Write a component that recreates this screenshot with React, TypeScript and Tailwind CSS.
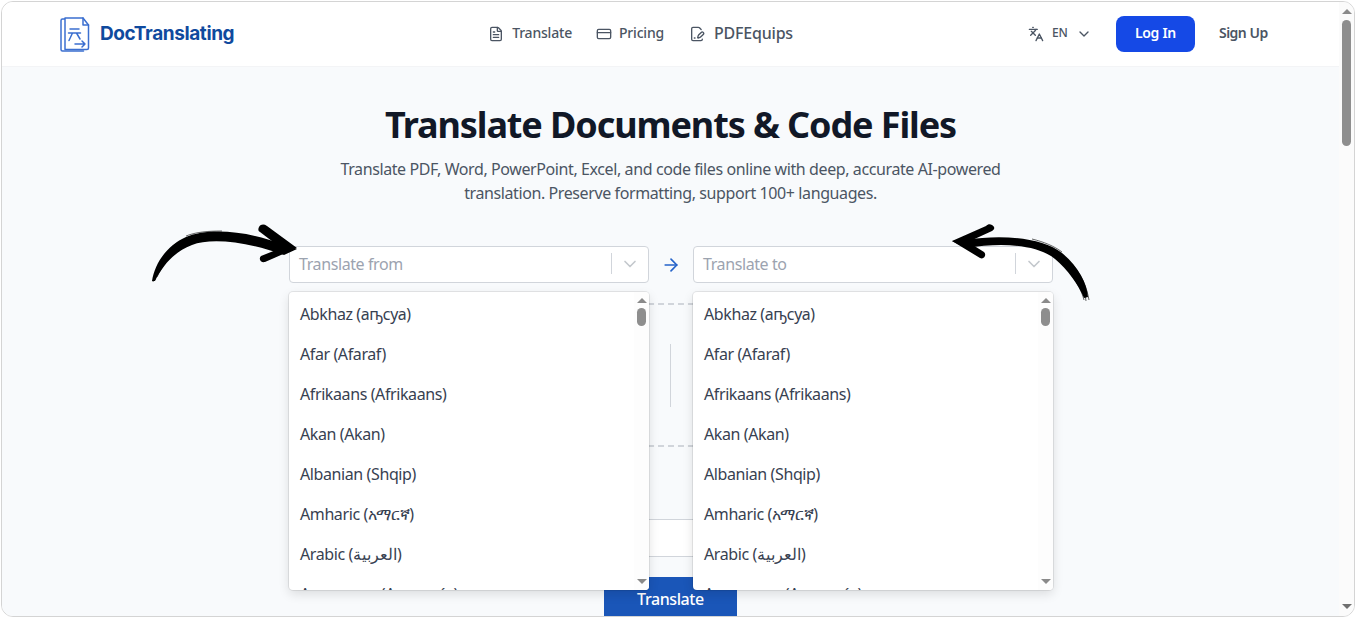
import { ArrowRight, ChevronDown, CreditCard, FilePenLine, FileText, Languages } from 'lucide-react';

const languages = [
  'Abkhaz (аҧсуа)',
  'Afar (Afaraf)',
  'Afrikaans (Afrikaans)',
  'Akan (Akan)',
  'Albanian (Shqip)',
  'Amharic (አማርኛ)',
  'Arabic (العربية)',
  'Aragonese (Aragonés)',
];

const Logo = () => (
  <svg width="31" height="36" viewBox="0 0 31 36" fill="none" stroke="#3b6fd0" strokeWidth="1.5" strokeLinecap="round" strokeLinejoin="round">
    <path d="M5 3H2.500a1.500 1.500 0 0 0-1.500 1.500v29a1.500 1.500 0 0 0 1.500 1.500h21" />
    <path d="M5 3v30.500h22a1.500 1.500 0 0 0 1.500-1.500V9l-5.500-7H5z" fill="#fff" />
    <path d="M23 2v7h5.500" />
    <path d="M10 13h9M8.500 17h12M12.500 17l-3.500 7.500M16.500 17l3.500 6" />
    <path d="M15 28h10M22 25l3 3-3 3" />
  </svg>
);

const BrushArrows = () => (
  <div className="absolute left-[-2px] top-[-67px] z-20">
    <svg className="absolute left-[150px] top-[222px]" width="150" height="62" viewBox="150 222 150 62" fill="#000">
      <path d="M152 281C155 262 168 245 186 237C208 228 246 230 284 245L297 249L284 255C246 241 210 238 192 245C174 252 163 265 155 281Z" />
      <path d="M259 227C261 224 264 224 267 226L297 248L265 262C261 263 258 259 261 256L281 248L260 232C258 231 258 229 259 227Z" />
      <g fill="none" stroke="#000" strokeWidth="0.6">
        <path d="M153 282C156 266 164 252 178 242" />
        <path d="M155 280C158 268 166 256 180 245" />
        <path d="M157 277C161 268 168 258 176 252" />
        <path d="M186 236C196 232 208 231 222 231" />
      </g>
    </svg>
    <svg className="absolute left-[950px] top-[222px]" width="142" height="80" viewBox="950 222 142 80" fill="#000">
      <path d="M1088 297C1087 283 1078 266 1062 253C1042 238 1004 234 965 240L952 241L966 248C1004 242 1038 245 1055 259C1068 270 1078 284 1084 298Z" />
      <path d="M992 225C990 224 988 224 986 226L952 241L980 258C984 260 987 255 984 252L968 242L992 231C995 229 995 227 992 225Z" />
      <g fill="none" stroke="#000" strokeWidth="0.6">
        <path d="M1089 300C1087 288 1082 276 1073 265" />
        <path d="M1086 301C1085 290 1079 278 1071 268" />
        <path d="M1084 300C1082 292 1078 284 1072 276" />
        <path d="M1062 252C1054 246 1044 242 1032 239" />
      </g>
    </svg>
  </div>
);

const LanguageSelect = ({ placeholder }: { placeholder: string }) => (
  <div className="relative w-[360px]">
    <div className="flex h-[37px] items-center rounded border border-[#d1d5db] bg-white pb-[2px] pl-[9px] text-base tracking-[-0.4px] text-[#9ca3af]">
      <span className="flex-1">{placeholder}</span>
      <span className="h-[21px] w-px bg-[#d1d5db]" />
      <span className="flex w-[36px] justify-center text-[#c4c8cd]">
        <ChevronDown size={20} strokeWidth={2} />
      </span>
    </div>
    <div className="absolute left-0 top-[46px] z-10 flex h-[298px] w-[360px] overflow-hidden rounded bg-white shadow-[0_0_0_1px_rgba(0,0,0,0.08),0_4px_11px_rgba(0,0,0,0.12)]">
      <ul className="flex-1 overflow-hidden">
        {languages.map((l) => (
          <li key={l} className="flex h-10 items-center whitespace-nowrap pl-[11px] text-base tracking-[-0.4px] text-[#374151] first:mt-[2px]">
            {l}
          </li>
        ))}
      </ul>
      <div className="flex w-[15px] flex-col items-center bg-[#fdfdfd] pt-[6px] pb-[6px]">
        <span className="h-0 w-0 border-x-[5px] border-b-[5px] border-x-transparent border-b-[#8a8a8a]" />
        <span className="mt-[5px] h-[18px] w-[9px] rounded-full bg-[#8e8e8e]" />
        <span className="mt-auto h-0 w-0 border-x-[5px] border-t-[5px] border-x-transparent border-t-[#8a8a8a]" />
      </div>
    </div>
  </div>
);

export default function App() {
  return (
    <div className="h-[622px] bg-white pl-px pr-[3px] pt-px font-['Noto_Sans',sans-serif]">
      <div className="relative flex h-[616px] overflow-hidden rounded-xl border border-[#d4d4d4]">
        <div className="min-w-0 flex-1">
          <header className="flex h-[65px] items-center border-b border-[#f3f4f6] bg-white pl-[58px]">
            <Logo />
            <span className="ml-[9px] font-['Inter',sans-serif] text-[19px] font-bold tracking-[-0.4px] text-[#0f4a9e]">DocTranslating</span>
            <nav className="ml-[254px] flex items-center text-sm font-medium tracking-[-0.2px] text-[#4b5563]">
              <FileText size={16} />
              <span className="ml-[8px] pb-[2px]">Translate</span>
              <CreditCard size={16} className="ml-[24px]" />
              <span className="ml-[7px] pb-[2px]">Pricing</span>
              <FilePenLine size={16} className="ml-[25px]" />
              <span className="ml-[9px] pb-[2px] text-base">PDFEquips</span>
            </nav>
            <div className="ml-[235px] flex items-center text-xs font-medium text-[#4b5563]">
              <Languages size={16} />
              <span className="ml-[8px] pb-[2px]">EN</span>
              <ChevronDown size={16} className="ml-[8px]" />
            </div>
            <button className="ml-[24px] h-9 w-[79px] rounded-lg bg-[#1549e6] pb-[2px] text-sm font-semibold tracking-[-0.3px] text-white">Log In</button>
            <span className="ml-6 pb-[2px] text-sm font-semibold tracking-[-0.5px] text-[#4b5563]">Sign Up</span>
          </header>

          <main className="relative h-[549px] overflow-hidden bg-[#f8fafc]">
            <h1 className="pt-[34px] text-center text-4xl font-bold leading-[48px] tracking-[-1.1px] text-[#111827]">Translate Documents &amp; Code Files</h1>
            <p className="mx-auto mt-[8px] w-[700px] text-center text-base leading-6 tracking-[-0.4px] text-[#4b5563]">
              Translate PDF, Word, PowerPoint, Excel, and code files online with deep, accurate AI-powered translation. Preserve formatting, support 100+ languages.
            </p>

            <div className="ml-[287px] mt-[41px] flex w-[764px] items-center justify-between">
              <LanguageSelect placeholder="Translate from" />
              <ArrowRight size={20} className="text-[#2563c9]" />
              <LanguageSelect placeholder="Translate to" />
            </div>

            {/* upload area behind the open menus */}
            <div className="ml-[287px] mt-[20px] flex h-[144px] w-[764px] items-center justify-center border-y-2 border-dashed border-[#d1d5db] pr-[2px]">
              <span className="h-[63px] w-px bg-[#d1d5db]" />
            </div>
            <div className="ml-[287px] mt-[72px] h-[38px] w-[764px] border border-[#d1d5db] bg-white" />
            <div className="mt-[20px] flex justify-center">
              <button className="h-[43px] w-[133px] shrink-0 bg-[#1a56b8] text-base font-medium tracking-[-0.4px] text-white">Translate</button>
            </div>

            <BrushArrows />
          </main>
        </div>

        <div className="flex w-[15px] flex-col items-center bg-[#fbfbfb] pt-[7px] pb-[7px]">
          <span className="h-0 w-0 border-x-[5px] border-b-[5px] border-x-transparent border-b-[#8a8a8a]" />
          <span className="mt-[6px] h-[126px] w-[9px] rounded-full bg-[#8e8e8e]" />
          <span className="mt-auto h-0 w-0 border-x-[5px] border-t-[5px] border-x-transparent border-t-[#707070]" />
        </div>
      </div>
    </div>
  );
}
